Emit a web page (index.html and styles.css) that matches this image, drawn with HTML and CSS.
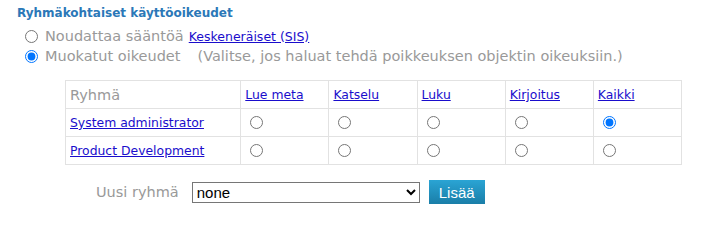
FILE: index.html
```html
<!DOCTYPE html>
<html lang="fi">
<head>
    <meta charset="UTF-8">
    <title>Ryhmäkohtaiset käyttöoikeudet</title>
    <link rel="stylesheet" href="styles.css">
</head>
<body>
    <h3 class="section-title">Ryhmäkohtaiset käyttöoikeudet</h3>

    <div class="scope-options">
        <label class="scope-row">
            <input type="radio" name="scope" value="rule">
            <span class="muted">Noudattaa sääntöä</span>
            <a href="#" class="rule-link">Keskeneräiset (SIS)</a>
        </label>
        <label class="scope-row">
            <input type="radio" name="scope" value="custom" checked>
            <span class="muted">Muokatut oikeudet</span>
            <span class="muted hint">(Valitse, jos haluat tehdä poikkeuksen objektin oikeuksiin.)</span>
        </label>
    </div>

    <table class="rights">
        <colgroup>
            <col class="col-group">
            <col class="col-right">
            <col class="col-right">
            <col class="col-right">
            <col class="col-right">
            <col class="col-right">
        </colgroup>
        <tr>
            <th class="muted">Ryhmä</th>
            <th><a href="#">Lue meta</a></th>
            <th><a href="#">Katselu</a></th>
            <th><a href="#">Luku</a></th>
            <th><a href="#">Kirjoitus</a></th>
            <th><a href="#">Kaikki</a></th>
        </tr>
        <tr>
            <td><a href="#" class="group-link">System administrator</a></td>
            <td><input type="radio" name="g1"></td>
            <td><input type="radio" name="g1"></td>
            <td><input type="radio" name="g1"></td>
            <td><input type="radio" name="g1"></td>
            <td><input type="radio" name="g1" checked></td>
        </tr>
        <tr>
            <td><a href="#" class="group-link">Product Development</a></td>
            <td><input type="radio" name="g2"></td>
            <td><input type="radio" name="g2"></td>
            <td><input type="radio" name="g2"></td>
            <td><input type="radio" name="g2"></td>
            <td><input type="radio" name="g2"></td>
        </tr>
    </table>

    <div class="add-group">
        <span class="muted">Uusi ryhmä</span>
        <select class="group-select">
            <option>none</option>
        </select>
        <button type="button" class="add-button">Lisää</button>
    </div>
</body>
</html>
```

FILE: styles.css
```css
body {
    font-family: "DejaVu Sans", Verdana, sans-serif;
    font-size: 14.5px;
    margin: 0;
    padding: 6px 0 0 17px;
    color: #333;
}
a {
    color: #1a0dcc;
}
.muted {
    color: #999;
}
.section-title {
    margin: 0 0 6px 0;
    font-size: 12px;
    font-weight: bold;
    color: #2b78b8;
}
.scope-options {
    padding-left: 3px;
}
.scope-row {
    display: flex;
    align-items: center;
    height: 20px;
}
.scope-row input {
    margin: 0 7px 0 5px;
    width: 13px;
    height: 13px;
}
.rule-link {
    font-size: 12.5px;
    margin-left: 5px;
}
.hint {
    margin-left: 17px;
}
.rights {
    border-collapse: collapse;
    margin: 14px 0 0 48px;
    width: 617px;
    table-layout: fixed;
}
.col-group {
    width: 175px;
}
.col-right {
    width: 88px;
}
.rights th,
.rights td {
    border: 1px solid #e2e2e2;
    height: 27px;
    padding: 0 4px;
    text-align: left;
    font-weight: normal;
    font-size: 12.4px;
}
.rights th.muted {
    font-size: 14.5px;
}
.rights td input {
    margin: 3px 0 0 5px;
    width: 13px;
    height: 13px;
}
.add-group {
    display: flex;
    align-items: center;
    margin: 15px 0 0 79px;
}
.add-group .muted {
    margin-right: 13px;
}
.group-select {
    width: 228px;
    height: 21px;
    font-family: "Liberation Sans", Arial, sans-serif;
    font-size: 15px;
    border: 1px solid #767676;
    background: #fff;
    color: #000;
}
.add-button {
    margin-left: 9px;
    height: 24px;
    padding: 0 10px;
    font-family: "Liberation Sans", Arial, sans-serif;
    font-size: 15px;
    color: #fff;
    border: none;
    background: linear-gradient(#2aa4d4, #1a7ea8);
    cursor: pointer;
}
```
